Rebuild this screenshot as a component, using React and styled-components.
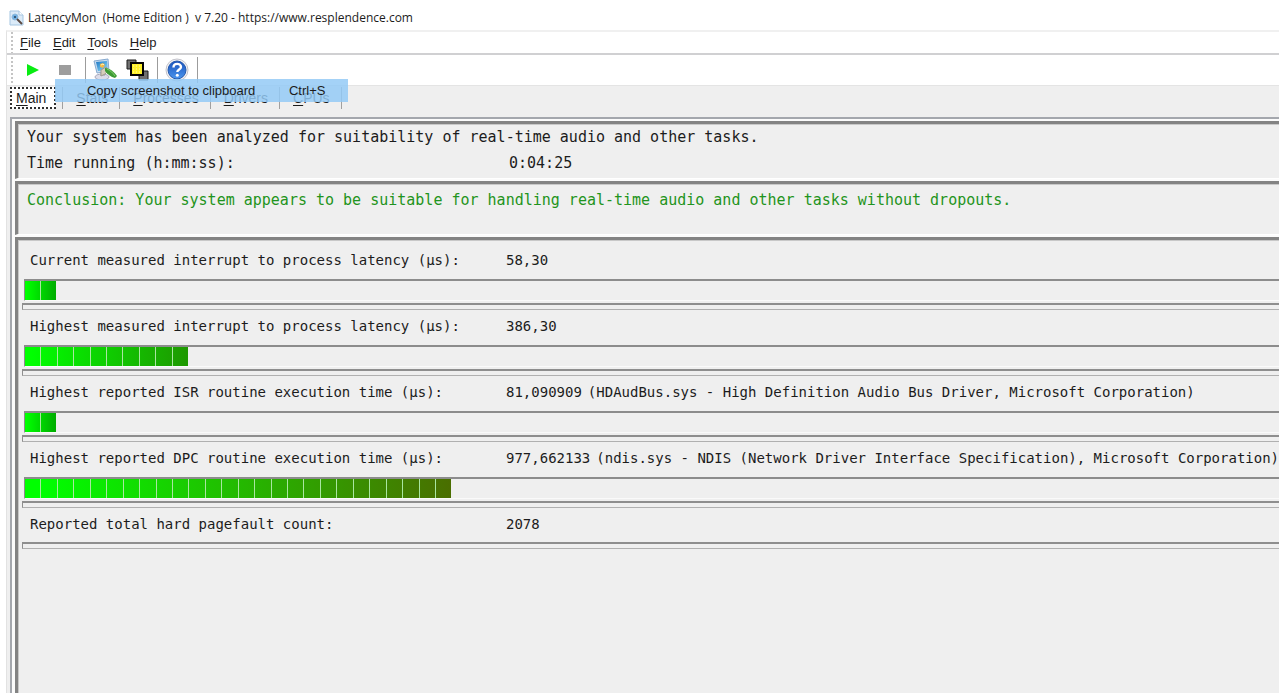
import React from 'react';
import styled, { createGlobalStyle } from 'styled-components';

const GlobalStyle = createGlobalStyle`
  * {
    box-sizing: border-box;
  }
  body {
    margin: 0;
    background: #ffffff;
    color: #1c1c1c;
    font-family: 'Liberation Sans', Arial, sans-serif;
    font-size: 13px;
    overflow: hidden;
  }
  button {
    border: 0;
    padding: 0;
    background: none;
    color: inherit;
    font: inherit;
  }
`;

const Window = styled.div`
  display: flex;
  flex-direction: column;
  min-height: 100vh;
  padding: 0 1px 1px 6px;
  overflow: hidden;
`;

const TitleBar = styled.header`
  display: flex;
  align-items: center;
  gap: 4px;
  height: 30px;
  padding: 6px 0 0 3px;
`;

const Title = styled.h1`
  margin: 0;
  font-family: 'Open Sans', 'Noto Sans', sans-serif;
  font-size: 12px;
  font-weight: 400;
  line-height: 24px;
  white-space: pre;
`;

const Frame = styled.div`
  flex: 1;
  display: flex;
  flex-direction: column;
  border-top: 2px solid #f0f0f0;
  border-left: 1px solid #e2e2e2;
`;

const MenuBar = styled.nav`
  display: flex;
  align-items: center;
  height: 23px;
  padding-left: 4px;
  border-bottom: 2px solid #d0d0d2;
`;

const Grip = styled.span`
  align-self: stretch;
  width: 2px;
  margin: ${({ $inset }) => $inset || 0}px ${({ $gap }) => $gap}px 0 0;
  background: repeating-linear-gradient(#c4c4c4 0 2px, #ffffff 2px 4px);
`;

const MenuItem = styled.div`
  position: relative;
  margin-right: 12px;
`;

const Key = styled.span`
  text-decoration: underline;
  text-underline-offset: 2px;
`;

const Popup = styled.div`
  position: absolute;
  z-index: 2;
  top: 44px;
  left: 2px;
  width: 293px;
  height: 23px;
  background: rgba(147, 201, 246, 0.84);
`;

const PopupItem = styled.button`
  display: flex;
  align-items: center;
  width: 100%;
  height: 100%;
  padding-left: 32px;
  white-space: nowrap;
`;

const PopupLabel = styled.span`
  width: 202px;
  text-align: left;
`;

const ToolBar = styled.div`
  display: flex;
  align-items: center;
  height: 30px;
  padding-left: 4px;
`;

const ToolButton = styled.button`
  display: flex;
  align-items: center;
  justify-content: center;
  width: 32px;
  height: 28px;
`;

const ToolSeparator = styled.span`
  width: 1px;
  height: 26px;
  margin: 0 3px 0 4px;
  background: #9c9c9c;
`;

const Workspace = styled.main`
  flex: 1;
  display: flex;
  flex-direction: column;
  padding-left: 3px;
  border-top: 1px solid #e4e4e4;
  background: #efefef;
`;

const Tabs = styled.div`
  display: flex;
  align-items: center;
  height: 24px;
  margin-bottom: 7px;
  font-size: 14px;
`;

const Tab = styled.button`
  height: 22px;
  padding: ${({ $active }) => ($active ? '0 8px 0 4px' : '0 11px 0 13px')};
  margin-right: ${({ $active }) => ($active ? 6 : 0)}px;
  border: ${({ $active }) => ($active ? '2px dotted #303030' : '0')};
  border-right: ${({ $active }) => ($active ? '2px dotted #303030' : '1px solid #a0a0a0')};
  background: ${({ $active }) => ($active ? '#ffffff' : 'transparent')};
  line-height: 18px;
`;

const TabDivider = styled.span`
  width: 1px;
  height: 22px;
  background: #a0a0a0;
`;

const Page = styled.section`
  flex: 1;
  display: flex;
  flex-direction: column;
  gap: 2px;
  padding: 2px 0 0 3px;
  border-top: 2px solid #a4a7ad;
  border-left: 2px solid #a4a7ad;
  background: #fbfbfb;
  font-family: 'DejaVu Sans Mono', monospace;
`;

const Panel = styled.div`
  flex: ${({ $grow }) => ($grow ? 1 : 'none')};
  padding: ${({ $pad }) => $pad};
  border-top: 3px solid #838383;
  border-left: 3px solid #838383;
  border-bottom: ${({ $grow }) => ($grow ? '0' : '1px solid #ffffff')};
  background: #efefef;
  box-shadow: inset 1px 1px #c8c8c8;
`;

const SummaryLine = styled.p`
  display: flex;
  margin: 0;
  font-size: 15px;
  line-height: ${({ $tall }) => ($tall ? 32 : 26)}px;
  color: ${({ $good }) => ($good ? '#1f9420' : 'inherit')};
  white-space: nowrap;
`;

const SummaryLabel = styled.span`
  flex: 0 0 482px;
`;

const MetricLine = styled.div`
  display: flex;
  padding: 0 0 2px 8px;
  font-size: 14px;
  line-height: 32px;
  white-space: nowrap;
`;

const MetricLabel = styled.span`
  flex: 0 0 476px;
`;

const MetricValue = styled.span`
  margin-right: 6px;
`;

const Bar = styled.div`
  height: 22px;
  margin: 1px 0 2px 2px;
  border-top: 2px solid #8c8c8c;
  border-left: 1px solid #8c8c8c;
  border-bottom: 1px solid #fafafa;
`;

const Fill = styled.div`
  display: flex;
  height: 100%;
  background: linear-gradient(to right, #00ff00 0 4%, ${({ $end }) => $end});
`;

const Segment = styled.span`
  flex: 1;
  border-right: 1px solid #a9e6a0;
  &:last-child {
    border-right: 0;
  }
`;

const Groove = styled.div`
  height: 7px;
  border: 1px solid #b0b0b0;
  border-top: 2px solid #8e8e8e;
  border-left-color: #8e8e8e;
  border-right: 0;
`;

const metrics = [
  {
    label: 'Current measured interrupt to process latency (µs):',
    value: '58,30',
    percent: 2.5,
    segments: 2,
    end: '#00ac00',
  },
  {
    label: 'Highest measured interrupt to process latency (µs):',
    value: '386,30',
    percent: 13,
    segments: 10,
    end: '#1e9800',
  },
  {
    label: 'Highest reported ISR routine execution time (µs):',
    value: '81,090909',
    detail: '(HDAudBus.sys - High Definition Audio Bus Driver, Microsoft Corporation)',
    percent: 2.5,
    segments: 2,
    end: '#00ac00',
  },
  {
    label: 'Highest reported DPC routine execution time (µs):',
    value: '977,662133',
    detail:
      '(ndis.sys - NDIS (Network Driver Interface Specification), Microsoft Corporation)',
    percent: 34,
    segments: 26,
    end: '#4a6e00',
  },
  { label: 'Reported total hard pagefault count:', value: '2078' },
];

const AppIcon = () => (
  <svg width="15" height="16" viewBox="0 0 15 16">
    <path d="M1 1h9l4 4v10H1z" fill="#dcebf8" stroke="#a5c6e2" />
    <path d="M10 1v4h4" fill="#ffffff" stroke="#a5c6e2" />
    <circle cx="6" cy="7" r="3" fill="#6fb0e4" stroke="#8fb9dc" />
    <circle cx="6" cy="7" r="1" fill="#24415c" />
    <path d="M8 9l5 5" stroke="#5c4a42" strokeWidth="2" />
  </svg>
);

const PlayIcon = () => (
  <svg width="14" height="14" viewBox="0 0 14 14">
    <path d="M1 1v12l12-6z" fill="#08ec12" />
  </svg>
);

const StopIcon = () => (
  <svg width="14" height="14" viewBox="0 0 14 14">
    <path d="M1 2h12v10H1z" fill="#9d9d9d" />
  </svg>
);

const CleanIcon = () => (
  <svg width="24" height="24" viewBox="0 0 24 24">
    <defs>
      <linearGradient id="screen" x1="0" y1="0" x2="1" y2="1">
        <stop offset="0" stopColor="#1d76c4" />
        <stop offset="1" stopColor="#8fe0fa" />
      </linearGradient>
    </defs>
    <ellipse cx="9" cy="19" rx="7" ry="3" fill="#dcdce8" stroke="#a9a9bb" />
    <path d="M7 14h5v4H7z" fill="#b8bac8" />
    <path d="M1 3l14-2 1 12-12 2z" fill="#c7dcf0" stroke="#86a9cf" />
    <path d="M3 4l11-1 1 9-10 1z" fill="url(#screen)" />
    <path d="M7 6l3-1 2 2-2 3-3-1z" fill="#f2b846" />
    <path d="M8 7l2-1 1 1" fill="none" stroke="#fff3b8" />
    <path d="M8 12l5-3 3 3-4 4-4 2z" fill="#d6cdbb" stroke="#a29c90" />
    <path d="M12 10c5 0 9 4 12 8l-2 2c-4-1-8-4-10-7z" fill="#3d9b35" />
    <path d="M14 11c3 1 6 4 8 7" fill="none" stroke="#83cf6d" />
  </svg>
);

const LayersIcon = () => (
  <svg width="24" height="24" viewBox="0 0 24 24">
    <path d="M2 2h9v9H2zM14 13h9v9h-9z" fill="#707070" stroke="#1a1a1a" strokeWidth="1" />
    <path d="M6 5h12v12H6z" fill="#fff22d" stroke="#050505" strokeWidth="2" />
    <path d="M8 8h8M8 11h8M8 14h8" stroke="#fffbb0" strokeDasharray="1 2" />
  </svg>
);

const HelpIcon = () => (
  <svg width="24" height="24" viewBox="0 0 24 24">
    <defs>
      <linearGradient id="ball" x1="0" y1="0" x2="0" y2="1">
        <stop offset="0" stopColor="#1750bb" />
        <stop offset="1" stopColor="#4b96ee" />
      </linearGradient>
    </defs>
    <circle cx="12" cy="12" r="11" fill="#f3f3f5" stroke="#c3c3cb" />
    <circle cx="12" cy="12" r="9" fill="url(#ball)" stroke="#2459ad" />
    <path
      d="M8.500 9.500c0-5 7.500-4.500 7.500-.5 0 2.500-3.700 2.500-3.700 5"
      fill="none"
      stroke="#ffffff"
      strokeWidth="2.400"
    />
    <circle cx="12.300" cy="17.300" r="1.500" fill="#ffffff" />
  </svg>
);

const MenuLabel = ({ children }) => (
  <>
    <Key>{children[0]}</Key>
    {children.slice(1)}
  </>
);

const Metric = ({ label, value, detail, percent, segments, end }) => (
  <>
    <MetricLine>
      <MetricLabel>{label}</MetricLabel>
      <MetricValue>{value}</MetricValue>
      {detail && <span>{detail}</span>}
    </MetricLine>
    {segments && (
      <Bar role="meter" aria-label={label} aria-valuenow={percent}>
        <Fill $end={end} style={{ width: `${percent}%` }}>
          {Array.from({ length: segments }, (_, i) => (
            <Segment key={i} />
          ))}
        </Fill>
      </Bar>
    )}
    <Groove />
  </>
);

const App = () => (
  <Window>
    <GlobalStyle />
    <TitleBar>
      <AppIcon />
      <Title>{'LatencyMon  (Home Edition )  v 7.20 - https://www.resplendence.com'}</Title>
    </TitleBar>
    <Frame>
      <MenuBar>
        <Grip $gap={7} />
        <MenuItem>
          <button type="button"><MenuLabel>File</MenuLabel></button>
        </MenuItem>
        <MenuItem>
          <button type="button"><MenuLabel>Edit</MenuLabel></button>
          <Popup>
            <PopupItem type="button">
              <PopupLabel>Copy screenshot to clipboard</PopupLabel>
              <span>Ctrl+S</span>
            </PopupItem>
          </Popup>
        </MenuItem>
        <MenuItem>
          <button type="button"><MenuLabel>Tools</MenuLabel></button>
        </MenuItem>
        <MenuItem>
          <button type="button"><MenuLabel>Help</MenuLabel></button>
        </MenuItem>
      </MenuBar>
      <ToolBar>
        <Grip $inset={2} $gap={4} />
        <ToolButton type="button" aria-label="Start"><PlayIcon /></ToolButton>
        <ToolButton type="button" aria-label="Stop"><StopIcon /></ToolButton>
        <ToolSeparator />
        <ToolButton type="button" aria-label="Options"><CleanIcon /></ToolButton>
        <ToolButton type="button" aria-label="Windows"><LayersIcon /></ToolButton>
        <ToolSeparator />
        <ToolButton type="button" aria-label="Help"><HelpIcon /></ToolButton>
        <ToolSeparator />
      </ToolBar>
      <Workspace>
        <Tabs>
          <Tab type="button" $active><MenuLabel>Main</MenuLabel></Tab>
          <TabDivider />
          {['Stats', 'Processes', 'Drivers', 'CPUs'].map(name => (
            <Tab key={name} type="button">
              <MenuLabel>{name}</MenuLabel>
            </Tab>
          ))}
        </Tabs>
        <Page>
          <Panel $pad="0 0 2px 9px">
            <SummaryLine>
              Your system has been analyzed for suitability of real-time audio and other tasks.
            </SummaryLine>
            <SummaryLine>
              <SummaryLabel>Time running (h:mm:ss):</SummaryLabel>
              <span>0:04:25</span>
            </SummaryLine>
          </Panel>
          <Panel $pad="0 0 18px 9px">
            <SummaryLine $good $tall>
              Conclusion: Your system appears to be suitable for handling real-time audio and
              other tasks without dropouts.
            </SummaryLine>
          </Panel>
          <Panel $grow $pad="4px 0 0 4px">
            {metrics.map(metric => (
              <Metric key={metric.label} {...metric} />
            ))}
          </Panel>
        </Page>
      </Workspace>
    </Frame>
  </Window>
);

export default App;
